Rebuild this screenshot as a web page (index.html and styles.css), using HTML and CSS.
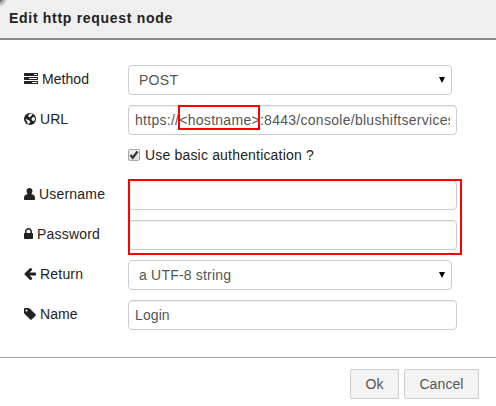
FILE: index.html
```
<!DOCTYPE html>
<html lang="en">
<head>
<meta charset="utf-8">
<title>Edit http request node</title>
<link rel="stylesheet" href="styles.css">
</head>
<body>
<div class="dialog">
  <header class="titlebar"><h1>Edit http request node</h1></header>
  <main class="form">
    <div class="row">
      <div class="label"><svg class="icon" width="14" height="14" viewBox="0 0 1792 1792"><path d="M1024 1408h640v-128h-640v128zm-384-512h1024v-128h-1024v128zm640-512h384v-128h-384v128zm512 832v256q0 26-19 45t-45 19h-1664q-26 0-45-19t-19-45v-256q0-26 19-45t45-19h1664q26 0 45 19t19 45zm0-512v256q0 26-19 45t-45 19h-1664q-26 0-45-19t-19-45v-256q0-26 19-45t45-19h1664q26 0 45 19t19 45zm0-512v256q0 26-19 45t-45 19h-1664q-26 0-45-19t-19-45v-256q0-26 19-45t45-19h1664q26 0 45 19t19 45z"/></svg><span class="method">Method</span></div>
      <div class="field select"><span>POST</span><i class="caret"></i></div>
    </div>
    <div class="row">
      <div class="label"><svg class="icon" width="12" height="14" viewBox="0 0 12 14"><circle cx="6" cy="7" r="6"/><path class="land" d="M5.200 2.200l2-.6 1.200.8-1 1.100-.8 1.200-1.500.6-.9-1.100zM8.300 5.500l1.400-.6 1.300 1.200-.2 1.800-1.300 1.300-1.300-.7-.8-1.300zM1.800 6.800l1.800.9 2 1 .7 1.200-.8 1.200-.6 1-1.300-.7-.6-2-1-1.300z"/></svg><span class="url">URL</span></div>
      <div class="field input"><span class="clip">https://<span class="host">&lt;hostname&gt;</span>:8443/console/blushiftservices</span></div>
    </div>
    <div class="check-row"><span class="checkbox"><svg width="12" height="12" viewBox="0 0 12 12"><path d="M2.500 6l2.300 2.700L9.500 2.500"/></svg></span><span class="check-text">Use basic authentication ?</span></div>
    <div class="credentials">
      <div class="row">
        <div class="label"><svg class="icon" width="11" height="14" viewBox="0 0 11 14"><path d="M5.500 1c1.800 0 2.900 1.200 2.900 2.900 0 1.400-.5 2.400-1.300 3.100 1.900.5 3.900 1.200 3.900 3.700v1.300c0 .6-.4 1-.9 1H.9c-.5 0-.9-.4-.9-1v-1.300C0 8.200 2 7.500 3.900 7 3.100 6.300 2.600 5.300 2.600 3.900 2.600 2.200 3.700 1 5.500 1z"/></svg><span class="user">Username</span></div>
        <div class="field input"></div>
      </div>
      <div class="row">
        <div class="label"><svg class="icon" width="9" height="14" viewBox="320 0 1152 1792"><path d="M640 768h512v-192q0-106-75-181t-181-75-181 75-75 181v192zm832 96v576q0 40-28 68t-68 28h-960q-40 0-68-28t-28-68v-576q0-40 28-68t68-28h32v-192q0-184 132-316t316-132 316 132 132 316v192h32q40 0 68 28t28 68z"/></svg><span class="pass">Password</span></div>
        <div class="field input"></div>
      </div>
    </div>
    <div class="row">
      <div class="label"><svg class="icon" width="12" height="14" viewBox="128 64 1536 1792"><path d="M1664 896v128q0 53-32.500 90.500t-84.500 37.500h-704l293 294q38 36 38 90t-38 90l-75 76q-37 37-90 37-52 0-91-37l-651-652q-37-37-37-90 0-52 37-91l651-650q38-38 91-38 52 0 90 38l75 74q38 38 38 91t-38 91l-293 293h704q52 0 84.500 37.500t32.500 90.500z"/></svg><span class="return">Return</span></div>
      <div class="field select"><span class="utf">a UTF-8 string</span><i class="caret"></i></div>
    </div>
    <div class="row">
      <div class="label"><svg class="icon" width="12" height="14" viewBox="128 0 1536 1792"><path d="M576 448q0-53-37.500-90.500t-90.500-37.500-90.500 37.500-37.500 90.500 37.500 90.500 90.500 37.500 90.500-37.500 37.500-90.500zm1067 576q0 53-37 90l-491 492q-39 37-91 37-53 0-90-37l-715-716q-38-37-64.500-101t-26.500-117v-416q0-52 38-90t90-38h416q53 0 117 26.500t102 64.500l715 714q37 39 37 91z"/></svg><span class="name">Name</span></div>
      <div class="field input"><span class="login">Login</span></div>
    </div>
  </main>
  <footer class="actions"><div class="button ok">Ok</div><div class="button cancel">Cancel</div></footer>
</div>
</body>
</html>
```
FILE: styles.css
```
*, *::before, *::after { box-sizing: border-box; }
body {
  margin: 0;
  width: 496px;
  height: 406px;
  overflow: hidden;
  background: #fff;
  color: #222;
  font: 14px/20px "Liberation Sans", Arial, sans-serif;
  white-space: nowrap;
}
.titlebar {
  height: 40px;
  padding: 8px 9px;
  border-bottom: 2px solid #888;
  background: radial-gradient(circle at 0 0, #222 0, #999 2px, #efefef 7px);
}
h1 { margin: 0; font-size: 14px; line-height: 20px; letter-spacing: .7px; }
.form {
  height: 317px;
  padding: 25px 0 0 24px;
}
.row { display: flex; height: 30px; margin-bottom: 10px; }
.label { display: flex; width: 104px; height: 28px; align-items: center; letter-spacing: .2px; }
.method, .url, .name { letter-spacing: .05px; }
.icon { display: block; margin-right: 4px; fill: #222; }
.land { fill: #fff; }
.field {
  display: flex;
  align-items: center;
  height: 30px;
  border: 1px solid #ccc;
  border-radius: 4px;
  color: #555;
  letter-spacing: .28px;
}
.select { width: 324px; padding: 0 6px 0 10px; justify-content: space-between; }
.input { width: 329px; padding: 0 6px; box-shadow: inset 0 1px 1px rgba(0,0,0,.075); }
.utf { letter-spacing: .2px; }
.login { letter-spacing: .1px; }
.caret { border: 3px solid transparent; border-top: 6px solid #000; border-bottom: 0; }
.clip { width: 100%; overflow-x: clip; overflow-y: visible; }
.clip, .host { line-height: 28px; }
.host { position: relative; }
.host::before {
  content: "";
  position: absolute;
  top: -7px;
  left: -1px;
  width: 82px;
  height: 25px;
  border: 2px solid #f00;
}
.check-row { display: flex; height: 20px; margin-bottom: 15px; align-items: center; padding-left: 104px; }
.checkbox {
  width: 12px;
  height: 12px;
  margin-right: 5px;
  border: 1px solid #aaa;
  border-radius: 2px;
  background: linear-gradient(#eee, #ddd);
}
.checkbox svg { display: block; margin: -1px; fill: none; stroke: #333; stroke-width: 2.2; }
.check-text { letter-spacing: .18px; }
.credentials { position: relative; }
.credentials::after {
  content: "";
  position: absolute;
  left: 104px;
  top: -1px;
  width: 334px;
  height: 76px;
  border: 2px solid #f00;
}
.actions {
  display: flex;
  height: 49px;
  gap: 5px;
  padding: 11px 17px 0 0;
  justify-content: flex-end;
  border-top: 1px solid #aaa;
}
.button {
  height: 30px;
  border: 1px solid #ccc;
  border-radius: 2px;
  background: #f3f3f3;
  color: #555;
  line-height: 28px;
  text-align: center;
  letter-spacing: .1px;
}
.ok { width: 49px; }
.cancel { width: 75px; }
```
